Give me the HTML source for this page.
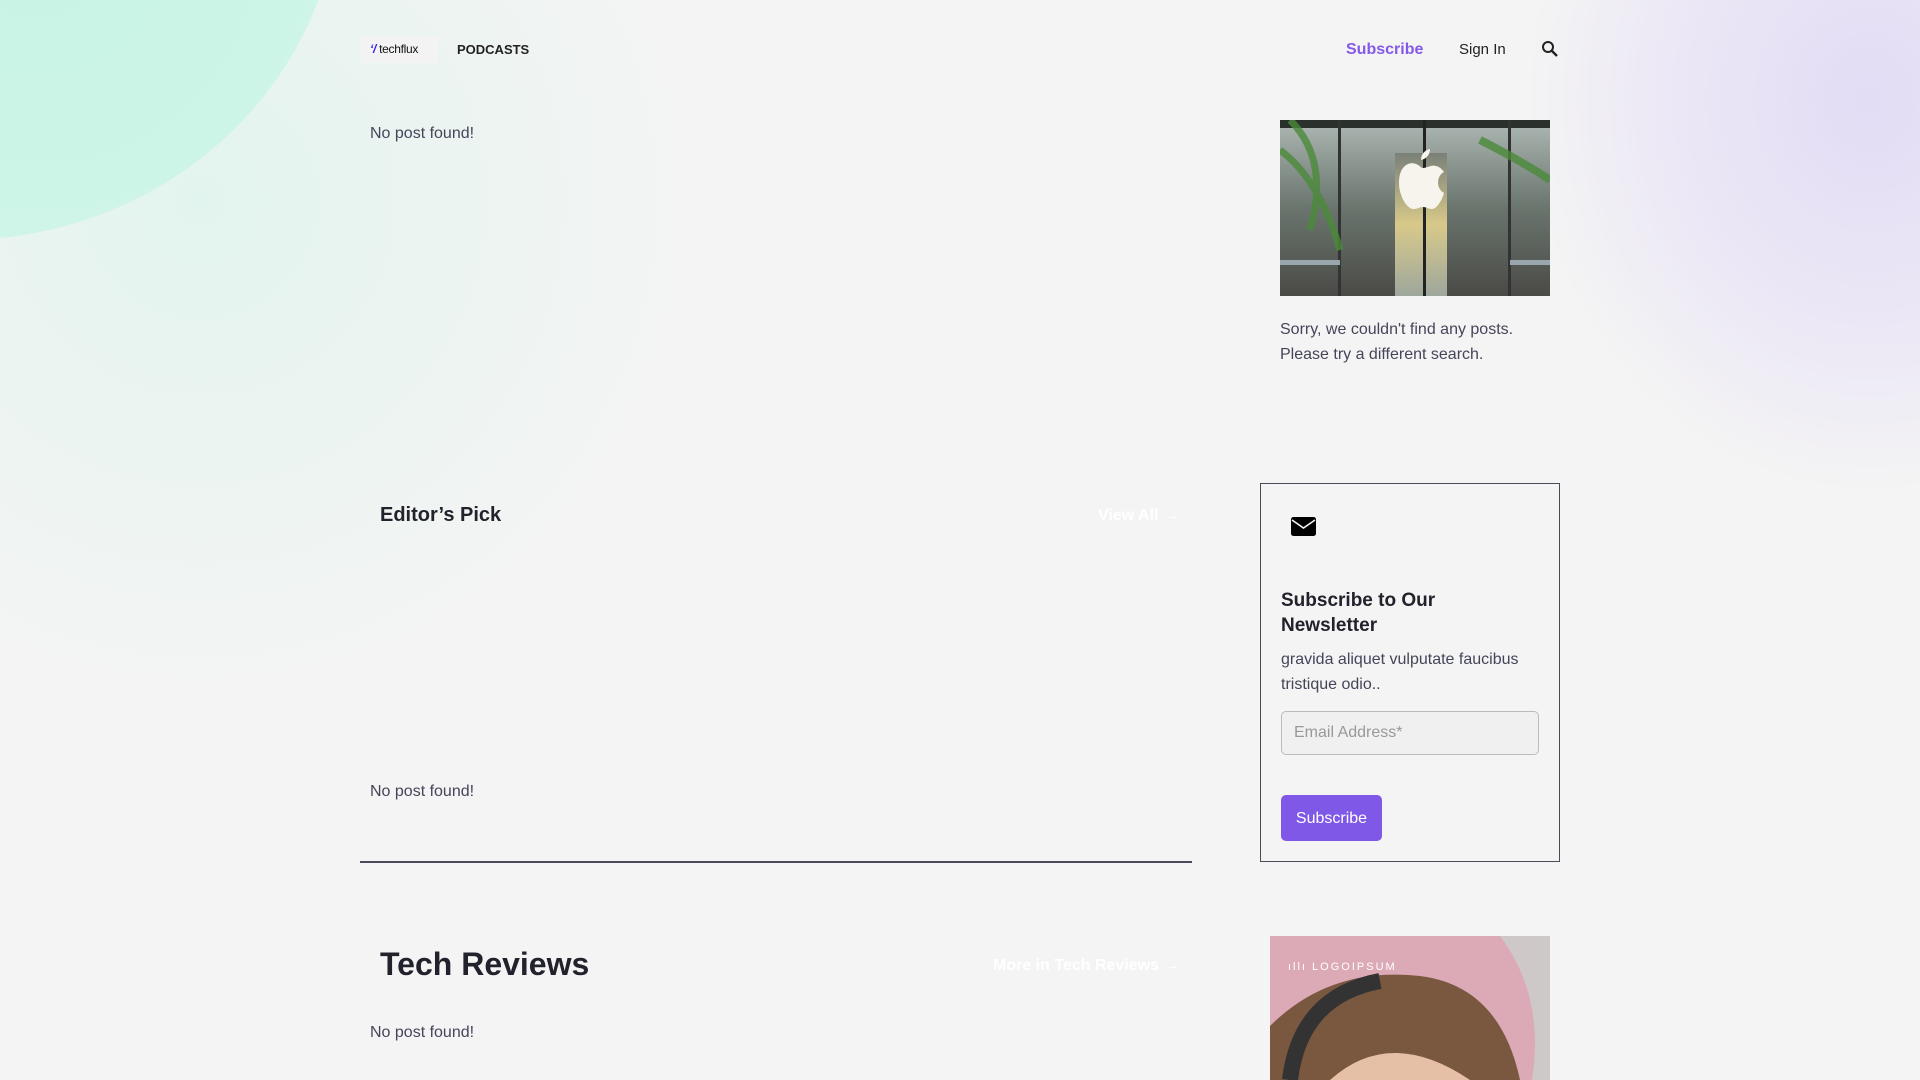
<!DOCTYPE html>
<html><head><meta charset="utf-8"><style>
*{margin:0;padding:0;box-sizing:border-box}
body{width:1920px;height:1080px;overflow:hidden;background:#f4f4f4;font-family:"Liberation Sans",sans-serif;position:relative;color:#45455a}
.bg1{position:absolute;left:-420px;top:-480px;width:760px;height:720px;border-radius:50%;background:radial-gradient(ellipse at 60% 60%,#c8f4e4 0%,#cff5e8 55%,#daf5ec 80%,rgba(230,245,240,0) 100%);}
.bg1b{position:absolute;left:-300px;top:-300px;width:1000px;height:1000px;border-radius:50%;background:radial-gradient(circle,rgba(205,245,230,.45) 0%,rgba(244,244,244,0) 70%)}
.bg2{position:absolute;right:-300px;top:-300px;width:700px;height:800px;border-radius:50%;background:radial-gradient(ellipse,rgba(226,220,245,1) 0%,rgba(232,226,246,.7) 40%,rgba(244,244,244,0) 70%)}
.a{position:absolute;white-space:nowrap}
.np{font-size:16px;color:#45455a}
</style></head><body>
<div class="bg1b"></div><div class="bg1"></div><div class="bg2"></div>

<div class="a" style="left:360px;top:36px;width:78px;height:27px;background:#f3f3f3"></div>
<div class="a" style="left:370px;top:42px;font-size:12px;color:#111;letter-spacing:-.3px"><span style="color:#3322ee;font-weight:bold;font-style:italic">ʻ/</span> techflux</div>
<div class="a" style="left:457px;top:42px;font-size:13px;font-weight:bold;color:#222">PODCASTS</div>
<div class="a" style="left:1346px;top:41px;font-size:16px;font-weight:bold;color:#8559e8">Subscribe</div>
<div class="a" style="left:1459px;top:41px;font-size:15px;color:#222">Sign In</div>
<svg class="a" style="left:1541px;top:40px" width="18" height="18" viewBox="0 0 18 18"><circle cx="7" cy="7" r="5" fill="none" stroke="#222" stroke-width="2"/><path d="M10.5 10.5L16 16" stroke="#222" stroke-width="2.4"/></svg>

<div class="a np" style="left:370px;top:125px">No post found!</div>

<svg class="a" style="left:1280px;top:120px" width="270" height="176" viewBox="0 0 270 176">
<defs><linearGradient id="g1" x1="0" y1="0" x2="0" y2="1"><stop offset="0" stop-color="#aeb8b4"/><stop offset=".5" stop-color="#6a756e"/><stop offset="1" stop-color="#4a4a46"/></linearGradient>
<linearGradient id="g2" x1="0" y1="0" x2="0" y2="1"><stop offset="0" stop-color="#7a8078"/><stop offset=".5" stop-color="#d8c98a"/><stop offset="1" stop-color="#9ea79c"/></linearGradient></defs>
<rect width="270" height="176" fill="url(#g1)"/>
<rect width="270" height="8" fill="#2a302c"/>
<rect x="115" y="33" width="52" height="143" fill="url(#g2)"/>
<rect x="58" y="0" width="3" height="176" fill="#333"/><rect x="143" y="0" width="3" height="176" fill="#222"/><rect x="228" y="0" width="3" height="176" fill="#333"/>
<path d="M0 30 Q40 60 60 130 M10 0 Q50 40 30 110" stroke="#4b8a3a" stroke-width="7" fill="none" opacity=".8"/>
<path d="M200 20 Q240 40 270 60" stroke="#4b8a3a" stroke-width="8" fill="none" opacity=".8"/>
<path d="M138 45c-6-4-19-2-19 18 0 14 9 27 15 26 4 0 5-2 9-2s5 2 9 2c5 0 10-9 12-16-8-4-8-17 0-21-4-6-10-7-13-6-4 1-6 2-8 2-2 0-3-2-5-3zM141 40c0-6 4-10 9-11 0 6-4 10-9 11z" fill="#f6f4ec"/>
<rect y="140" width="60" height="5" fill="#9aa6ae"/><rect x="230" y="140" width="40" height="5" fill="#9aa6ae"/>
</svg>
<div class="a" style="left:1280px;top:317px;font-size:16px;line-height:25px;color:#45455a">Sorry, we couldn't find any posts.<br>Please try a different search.</div>

<div class="a" style="left:380px;top:504px;font-size:20px;font-weight:bold;color:#22222c">Editor’s Pick</div>
<div class="a" style="left:1098px;top:507px;font-size:16px;font-weight:bold;color:#fff">View All →</div>
<div class="a np" style="left:370px;top:783px">No post found!</div>
<div class="a" style="left:360px;top:861px;width:832px;height:1.5px;background:#4a4a58"></div>

<div class="a" style="left:1260px;top:483px;width:300px;height:379px;border:1.5px solid #4a4a58"></div>
<svg class="a" style="left:1291px;top:517px" width="25" height="19" viewBox="0 0 25 19"><rect width="25" height="19" rx="2.5" fill="#000"/><path d="M1 3l11.5 8L24 3" stroke="#f4f4f4" stroke-width="1.6" fill="none"/></svg>
<div class="a" style="left:1281px;top:588px;font-size:19px;line-height:25px;font-weight:bold;color:#22222c">Subscribe to Our<br>Newsletter</div>
<div class="a" style="left:1281px;top:647px;font-size:16px;line-height:25px">gravida aliquet vulputate faucibus<br>tristique odio..</div>
<div class="a" style="left:1281px;top:711px;width:258px;height:44px;border:1px solid #bbb;border-radius:5px;background:#f0f0f0;padding:12px 12px;font-size:16px;color:#999">Email Address*</div>
<div class="a" style="left:1281px;top:795px;width:101px;height:46px;border-radius:5px;background:#7f58e8;color:#fff;font-size:16px;text-align:center;line-height:47px">Subscribe</div>

<div class="a" style="left:380px;top:946px;font-size:32px;font-weight:bold;color:#22222c">Tech Reviews</div>
<div class="a" style="left:993px;top:957px;font-size:16px;font-weight:bold;color:#fff">More in Tech Reviews →</div>
<div class="a np" style="left:370px;top:1024px">No post found!</div>

<svg class="a" style="left:1270px;top:936px" width="280" height="144" viewBox="0 0 280 144">
<rect width="280" height="144" fill="#dca9b6"/>
<path d="M230 0 Q275 60 262 144 L280 144 L280 0z" fill="#cfc8c8"/>
<path d="M0 90 Q60 30 150 40 Q230 50 250 144 L0 144z" fill="#7a5840"/>
<path d="M20 144 Q30 60 110 45" stroke="#333" stroke-width="16" fill="none"/>
<path d="M60 144 Q120 90 200 144z" fill="#e5c0a6"/>
<text x="18" y="34" font-family="Liberation Sans" font-size="11" fill="#fff" letter-spacing="2">ıllı LOGOIPSUM</text>
</svg>
</body></html>
